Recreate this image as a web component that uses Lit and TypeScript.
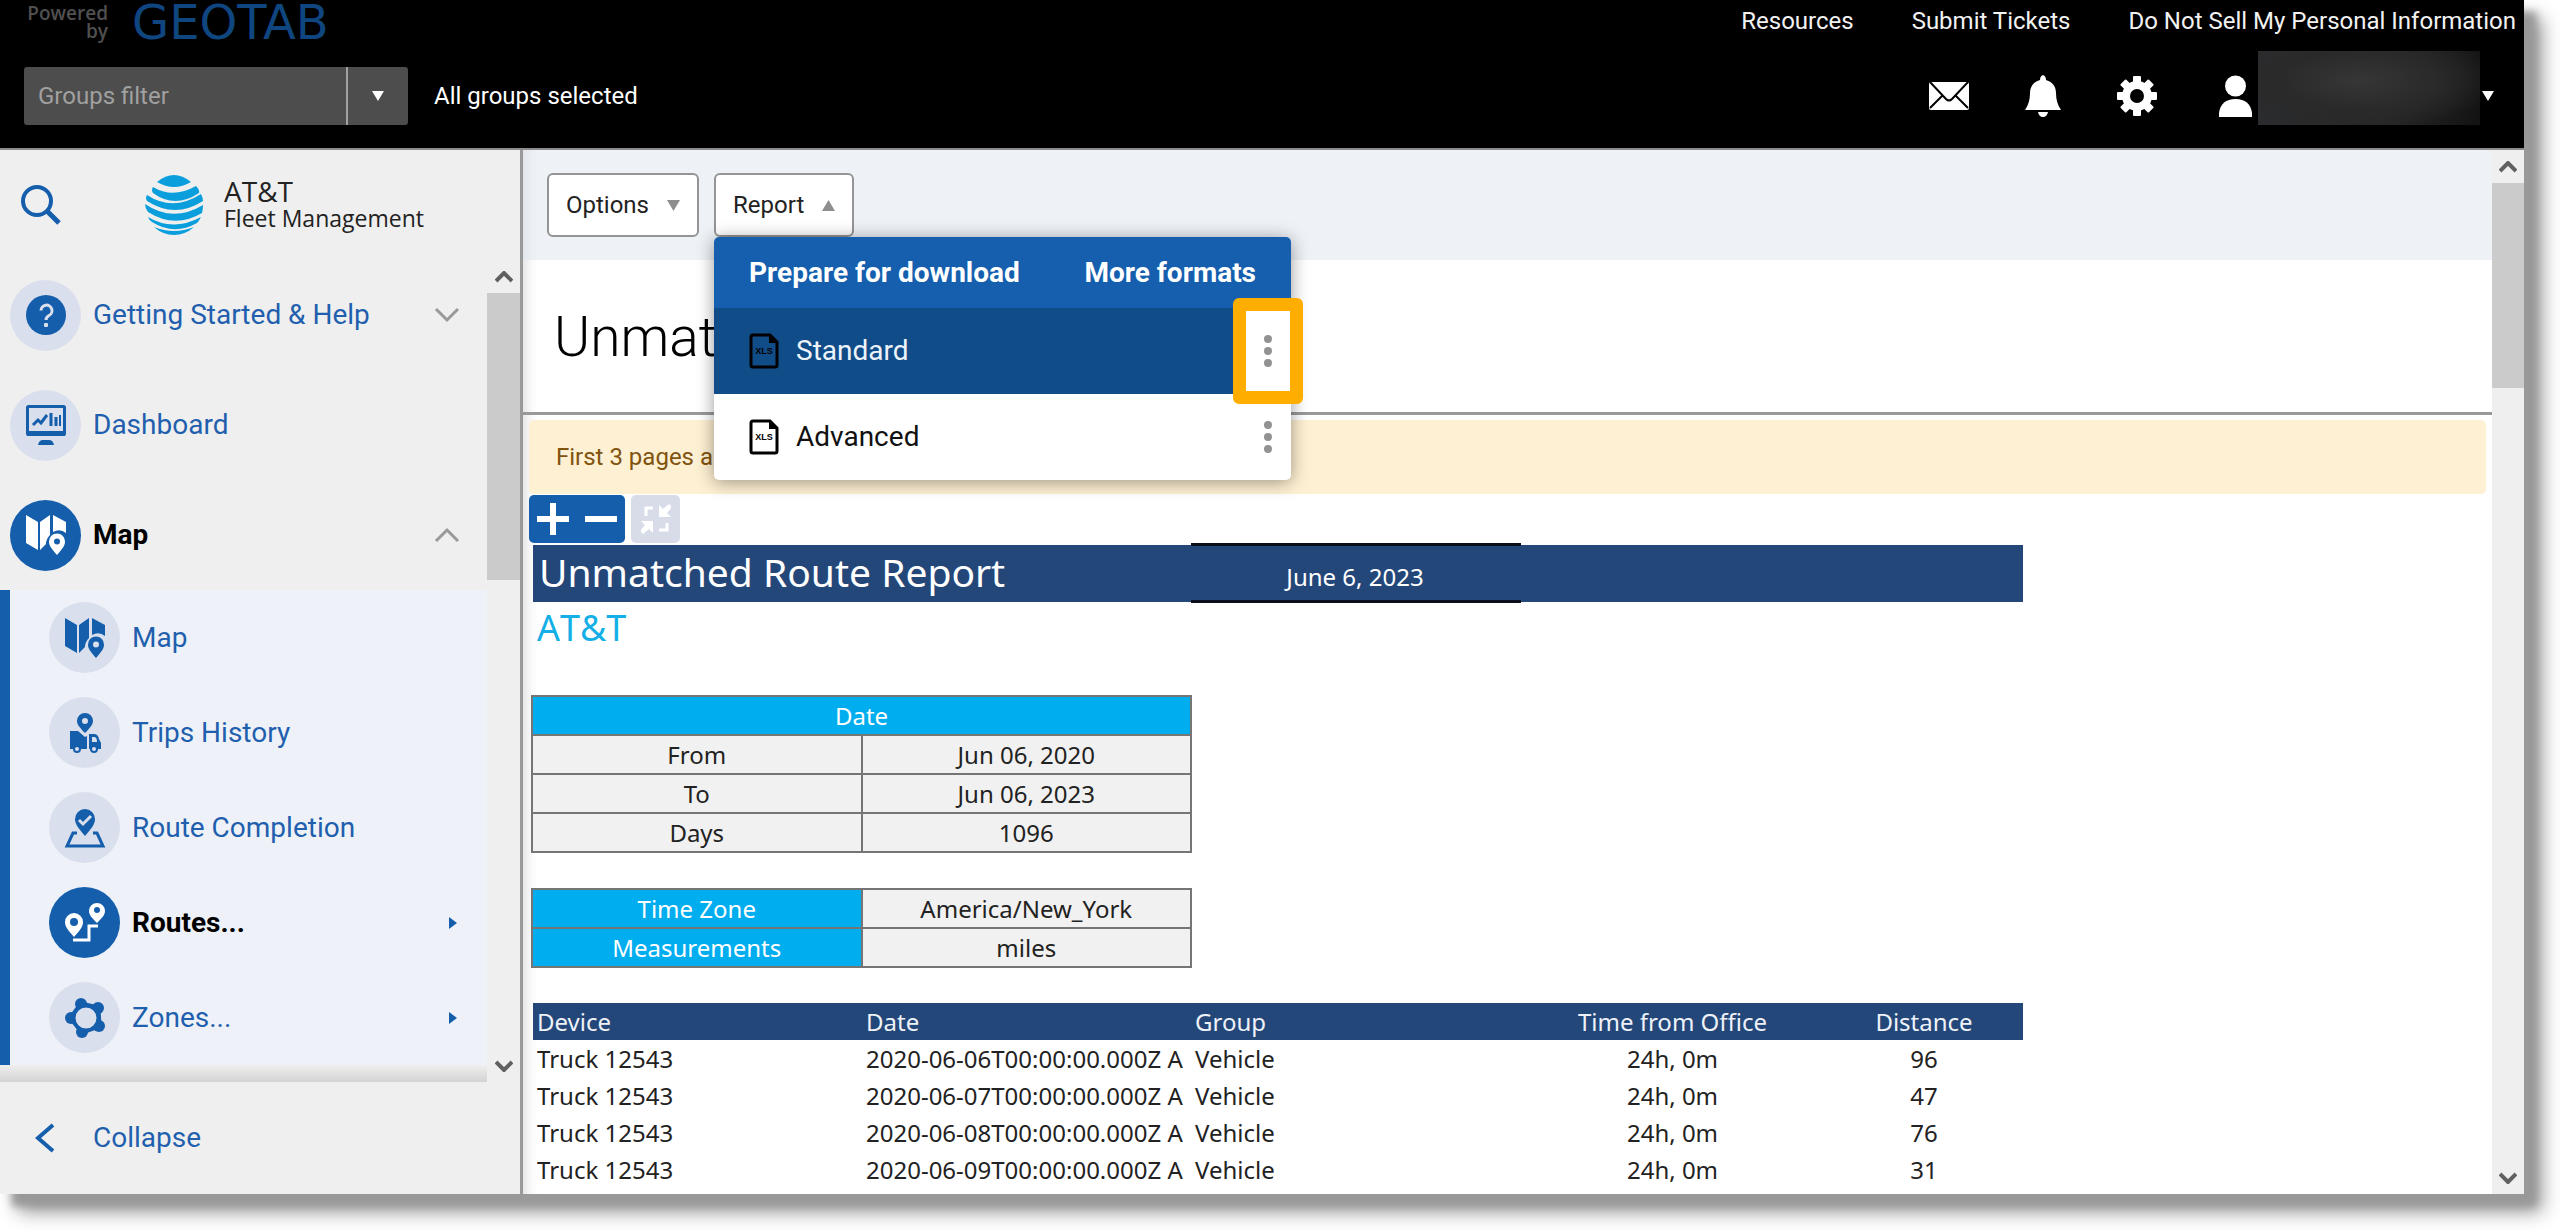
import { LitElement, html, css, svg, nothing } from "lit";
import { customElement, state } from "lit/decorators.js";

const icons: Record<string, unknown> = {
  help: svg`<circle cx="20" cy="20" r="20" fill="currentColor"/>
    <path d="M15 15.500a5.500 5.500 0 1 1 8 5c-2 1.200-3 2-3 4.500" fill="none" stroke="#d9dfec" stroke-width="3"/>
    <rect x="18" y="28" width="4" height="4" rx="1" fill="#d9dfec"/>`,
  dashboard: svg`<rect x="1.500" y="1.500" width="37" height="28" rx="1" fill="none" stroke="currentColor" stroke-width="3"/>
    <path d="M1 26h38v5H1zM12 40q1-5 5-5h6q4 0 5 5z" fill="currentColor"/>
    <path d="M7 20l5-5 3 3 6-8M25 8v13M30 12v9" fill="none" stroke="currentColor" stroke-width="3"/>
    <path d="M34 10v11" fill="none" stroke="currentColor" stroke-width="2"/>`,
  map: svg`<path fill="currentColor" d="M0 0L12 7V35L0 28ZM14 7L24 0V20Q20 24 20 29L14 35ZM27 0L40 7V18Q34 13 27 17Z"/>
    <path fill="currentColor" fill-rule="evenodd" d="M31 40C26 34 23 31 23 26.500A8 8 0 1 1 39 26.500C39 31 36 34 31 40ZM31 23.500a3 3 0 1 0 0 6a3 3 0 1 0 0-6Z"/>`,
  trips: svg`<path fill="currentColor" fill-rule="evenodd" d="M20 20C14 14 12 11 12 8A8 8 0 1 1 28 8C28 11 26 14 20 20ZM20 5a3 3 0 1 0 0 6a3 3 0 1 0 0-6Z"/>
    <path fill="currentColor" fill-rule="evenodd" d="M5 18h8l7 6 2-1v13H5ZM24 21h5q4 0 5 5l2 4v6H24ZM27 24v5h5q0-5-3-5Z"/>
    <circle cx="12" cy="36" r="3" fill="#d9dfec" stroke="currentColor" stroke-width="2"/>
    <circle cx="29" cy="36" r="3" fill="#d9dfec" stroke="currentColor" stroke-width="2"/>`,
  completion: svg`<path fill="currentColor" d="M20 28C12 19 10 15 10 11A10 10 0 1 1 30 11C30 15 28 19 20 28Z"/>
    <path d="M14 12l4 4 8-8" fill="none" stroke="#d9dfec" stroke-width="3"/>
    <path d="M12 25H8L2 38H38L32 25H28" fill="none" stroke="currentColor" stroke-width="3"/>`,
  routes: svg`<path fill="currentColor" fill-rule="evenodd" d="M9 34C3 27 0 24 0 19A9 9 0 1 1 18 19C18 24 15 27 9 34ZM9 15a4 4 0 1 0 0 8a4 4 0 1 0 0-8Z"/>
    <path fill="currentColor" fill-rule="evenodd" d="M32 20C27 15 24 12 24 8A8 8 0 1 1 40 8C40 12 37 15 32 20ZM32 4a3 3 0 1 0 0 6a3 3 0 1 0 0-6Z"/>
    <path d="M8 37H24V23H33" fill="none" stroke="currentColor" stroke-width="3"/>`,
  zones: svg`<path d="M16 6L33 10L34 28L17 34L6 20Z" fill="none" stroke="currentColor" stroke-width="5"/>
    <g fill="currentColor"><circle cx="16" cy="6" r="6"/><circle cx="33" cy="10" r="6"/><circle cx="34" cy="28" r="6"/><circle cx="17" cy="34" r="6"/><circle cx="6" cy="20" r="6"/></g>
    <circle cx="21" cy="20" r="11" fill="#d9dfec"/>
    <circle cx="21" cy="20" r="12" fill="none" stroke="currentColor" stroke-width="3"/>`,
};

const icon = (name: string) => html`<svg class="glyph" viewBox="0 0 40 40" aria-hidden="true">${icons[name]}</svg>`;
const chevron = (cls: string) => html`<svg class="chevron ${cls}" viewBox="0 0 26 16" aria-hidden="true"><path d="M2 2L13 13L24 2" fill="none" stroke="currentColor" stroke-width="3"/></svg>`;
const xls = html`<svg class="xls" viewBox="0 0 30 36" aria-hidden="true">
  <path d="M4 2H21L28 9V32Q28 34 26 34H4Q2 34 2 32V4Q2 2 4 2Z" fill="none" stroke="#000" stroke-width="3"/>
  <path d="M20 1L29 10H20Z" fill="#000"/>
  <text x="15" y="21" text-anchor="middle" font-family="Liberation Sans, sans-serif" font-weight="700" font-size="9">XLS</text></svg>`;
const dots = html`<svg class="dots" viewBox="0 0 8 32" aria-hidden="true"><circle cx="4" cy="4" r="4"/><circle cx="4" cy="16" r="4"/><circle cx="4" cy="28" r="4"/></svg>`;

interface NavItem { name: string; label: string; active?: boolean; fold?: "open" | "closed"; more?: boolean }

const mainNav: NavItem[] = [
  { name: "help", label: "Getting Started & Help", fold: "closed" },
  { name: "dashboard", label: "Dashboard" },
  { name: "map", label: "Map", active: true, fold: "open" },
];
const mapNav: NavItem[] = [
  { name: "map", label: "Map" },
  { name: "trips", label: "Trips History" },
  { name: "completion", label: "Route Completion" },
  { name: "routes", label: "Routes...", active: true, more: true },
  { name: "zones", label: "Zones...", more: true },
];
const rows = [
  ["Truck 12543", "2020-06-06T00:00:00.000Z A", "Vehicle", "24h, 0m", "96"],
  ["Truck 12543", "2020-06-07T00:00:00.000Z A", "Vehicle", "24h, 0m", "47"],
  ["Truck 12543", "2020-06-08T00:00:00.000Z A", "Vehicle", "24h, 0m", "76"],
  ["Truck 12543", "2020-06-09T00:00:00.000Z A", "Vehicle", "24h, 0m", "31"],
];

@customElement("app-header")
class AppHeader extends LitElement {
  static styles = css`
    :host { display: block; background: #000; color: #fff; border-bottom: 2px solid #8c8c8c; font: 24px/32px Roboto, sans-serif; }
    * { box-sizing: border-box; }
    .top { display: flex; justify-content: space-between; height: 44px; padding: 0 8px 0 24px; }
    .brand { display: flex; align-items: center; gap: 24px; }
    .powered { width: 84px; text-align: right; color: #505050; font: 600 19px/18px "Open Sans", sans-serif; }
    .geotab { color: #0f4680; font: 48px/44px "DejaVu Sans", sans-serif; }
    .links { display: flex; gap: 58px; padding-top: 5px; }
    a { color: #f2f2f2; text-decoration: none; }
    .bar { display: flex; align-items: center; height: 104px; padding: 0 30px 0 24px; }
    .filter { display: flex; width: 384px; height: 58px; border-radius: 3px; background: #4d4d4d; overflow: hidden; }
    input { flex: 1; min-width: 0; border: 0; background: none; padding: 0 14px; font: inherit; color: #fff; outline: 0; }
    input::placeholder { color: #a0a0a0; opacity: 1; }
    button { border: 0; padding: 0; background: none; color: #fff; font: inherit; display: flex; align-items: center; justify-content: center; }
    .open { width: 62px; border-left: 2px solid #a0a0a0; }
    .caret { width: 12px; height: 10px; fill: #fff; }
    .scope { margin-left: 26px; flex: 1; }
    .tool { width: 94px; height: 58px; }
    .user { margin-left: 35px; height: 104px; align-items: center; gap: 2px; }
    .name { width: 222px; height: 74px; margin: 0 0 17px 4px; background: radial-gradient(ellipse at 45% 40%, #363636 0, #2a2a2a 45%, transparent 80%), linear-gradient(100deg, #2b2c2f, #262626 60%, #131313); }
  `;
  render() {
    const caret = html`<svg class="caret" viewBox="0 0 12 10" aria-hidden="true"><path d="M0 0H12L6 10Z"/></svg>`;
    return html`
      <div class="top">
        <div class="brand"><span class="powered">Powered<br>by</span><span class="geotab">GEOTAB</span></div>
        <nav class="links"><a href="#">Resources</a><a href="#">Submit Tickets</a><a href="#">Do Not Sell My Personal Information</a></nav>
      </div>
      <div class="bar">
        <div class="filter"><input aria-label="Groups filter" placeholder="Groups filter"><button class="open" aria-label="Open groups">${caret}</button></div>
        <span class="scope">All groups selected</span>
        <button class="tool" aria-label="Messages"><svg width="40" height="28" viewBox="0 0 40 28"><rect width="40" height="28" rx="2" fill="#fff"/><path d="M1 0L17 17Q20 20 23 17L39 0M1 26L13 14M39 26L27 14" fill="none" stroke="#000" stroke-width="2"/></svg></button>
        <button class="tool" aria-label="Notifications"><svg width="36" height="42" viewBox="0 0 36 42"><path fill="#fff" d="M18 0Q21 1 21 5C28 7 31 12 31 18Q31 28 36 35H0Q5 28 5 18C5 12 8 7 15 5Q15 1 18 0ZM13 37H23Q22 42 18 42Q14 42 13 37Z"/></svg></button>
        <button class="tool" aria-label="Settings"><svg width="42" height="42" viewBox="-21 -21 42 42"><g fill="#fff">${[0, 45, 90, 135].map(a => svg`<rect x="-4" y="-20" width="8" height="40" rx="1" transform="rotate(${a})"/>`)}<circle r="15"/></g><circle r="7" fill="#000"/></svg></button>
        <button class="user" aria-label="Account"><svg width="33" height="42" viewBox="0 0 33 42"><circle cx="16.500" cy="11" r="10.500" fill="#fff"/><path d="M0 42V38Q2 24 16.500 24Q31 24 33 38V42Z" fill="#fff"/></svg><span class="name"></span>${caret}</button>
      </div>`;
  }
}

@customElement("app-scrollbar")
class AppScrollbar extends LitElement {
  static styles = css`
    :host { display: flex; flex-direction: column; align-items: center; background: #efefef; color: #606060; }
    .step { border: 0; background: none; padding: 0; width: 100%; height: 33px; color: inherit; display: grid; place-items: center; }
    .track { flex: 1; width: 100%; }
    .thumb { background: #cbcbcb; height: var(--thumb, 30%); }
    .chevron { width: 18px; height: 12px; }
    .up { transform: rotate(180deg); }
  `;
  render() {
    const arrow = (c: string) => html`<svg class="chevron ${c}" viewBox="0 0 18 12" aria-hidden="true"><path d="M1 2L9 10L17 2" fill="none" stroke="currentColor" stroke-width="4"/></svg>`;
    return html`<button class="step" aria-label="Scroll up">${arrow("up")}</button>
      <div class="track"><div class="thumb"></div></div>
      <button class="step" aria-label="Scroll down">${arrow("")}</button>`;
  }
}

@customElement("app-sidebar")
class AppSidebar extends LitElement {
  static styles = css`
    :host { display: flex; flex-direction: column; width: 523px; border-right: 3px solid #999; background: #efefef; color: #1f5fae; font: 28px/36px Roboto, sans-serif; box-sizing: border-box; min-height: 0; }
    * { box-sizing: border-box; }
    button, a { border: 0; background: none; padding: 0; font: inherit; color: inherit; text-decoration: none; text-align: left; }
    .head { display: flex; align-items: center; height: 110px; padding-left: 21px; }
    .search { width: 40px; height: 40px; }
    .logo { display: flex; align-items: center; gap: 21px; margin-left: 84px; color: #222; font: 500 23px/28px "Open Sans", sans-serif; }
    .logo b { font-weight: 500; font-size: 28px; display: block; line-height: 26px; }
    .body { display: flex; flex: 1; min-height: 0; }
    .nav { flex: 1; overflow: hidden; display: flex; flex-direction: column; }
    app-scrollbar { width: 33px; --thumb: 38%; }
    .item { display: flex; align-items: center; gap: 12px; height: 110px; padding: 0 27px 0 10px; flex: none; }
    .label { flex: 1; }
    .disc { width: 71px; height: 71px; border-radius: 50%; background: #d9dfec; color: #145eac; display: grid; place-items: center; }
    .active { color: #000; font-weight: 700; }
    .active .disc { background: #145eac; color: #fff; }
    .glyph { width: 40px; height: 40px; overflow: visible; }
    .chevron { width: 26px; height: 16px; color: #999; }
    .up { transform: rotate(180deg); }
    .sub { border-left: 10px solid #145eac; background: #eef2f8; flex: none; }
    .sub .item { height: 95px; padding: 0 30px 0 39px; }
    .more { width: 8px; height: 12px; fill: #145eac; }
    .fade { height: 17px; flex: none; background: linear-gradient(#efefef, #d3d3d3); }
    .collapse { display: flex; align-items: center; height: 112px; padding-left: 35px; gap: 38px; }
  `;
  private item(i: NavItem) {
    return html`<a href="#" class="item ${i.active ? "active" : ""}"><span class="disc">${icon(i.name)}</span><span class="label">${i.label}</span>
      ${i.fold ? chevron(i.fold === "open" ? "up" : "") : nothing}
      ${i.more ? html`<svg class="more" viewBox="0 0 8 12" aria-hidden="true"><path d="M0 0L8 6L0 12Z"/></svg>` : nothing}</a>`;
  }
  render() {
    return html`
      <div class="head">
        <button class="search" aria-label="Search"><svg width="40" height="40" viewBox="0 0 40 40"><circle cx="16" cy="16" r="14" fill="none" stroke="#145eac" stroke-width="4"/><path d="M26 26L38 38" stroke="#145eac" stroke-width="5"/></svg></button>
        <div class="logo">
          <svg width="58" height="60" viewBox="0 0 58 60" aria-hidden="true"><g fill="#0a9fdc">
            <path d="M12 7Q29 -7 46 7Q29 17 12 7Z"/>
            <path d="M8 12Q28 24 51 11Q55 15 54 18Q30 34 8 18Q6 15 8 12Z"/>
            <path d="M2 20Q28 37 56 19Q58 23 58 26Q30 44 2 26Q0 23 2 20Z"/>
            <path d="M0 29Q28 48 58 30Q58 34 57 38Q30 54 3 37Q0 33 0 29Z"/>
            <path d="M3 42Q28 57 56 42Q54 46 52 48Q29 61 7 47Q4 45 3 42Z"/>
            <path d="M9 52Q29 60 49 52Q40 60 29 60Q18 60 9 52Z"/></g></svg>
          <span><b>AT&amp;T</b>Fleet Management</span>
        </div>
      </div>
      <div class="body">
        <nav class="nav">${mainNav.map(i => this.item(i))}<div class="sub">${mapNav.map(i => this.item(i))}</div><div class="fade"></div></nav>
        <app-scrollbar></app-scrollbar>
      </div>
      <button class="collapse"><svg width="20" height="30" viewBox="0 0 20 30" aria-hidden="true"><path d="M18 2L3 15L18 28" fill="none" stroke="#145eac" stroke-width="4"/></svg>Collapse</button>`;
  }
}

@customElement("report-sheet")
class ReportSheet extends LitElement {
  static styles = css`
    :host { display: block; font: 24px/36px "Noto Sans", "Open Sans", sans-serif; color: #222; padding: 2px 10px 0; }
    * { box-sizing: border-box; }
    .banner { display: grid; grid-template-columns: 658px 330px 1fr; height: 57px; max-width: 1490px; background: #24477a; color: #fff; }
    h2 { margin: 0; padding-left: 6px; font-weight: 400; font-size: 39px; line-height: 54px; }
    .day { border: solid #0a0f1c; border-width: 3px 0; margin-top: -2px; height: 60px; text-align: center; line-height: 62px; padding-right: 2px; }
    .company { color: #14afe6; font-size: 36px; line-height: 52px; padding-left: 4px; height: 93px; font-kerning: none; }
    table { border-collapse: collapse; table-layout: fixed; }
    .facts { width: 661px; margin: 0 0 35px -2px; text-align: center; }
    .facts td, .facts th { border: 2px solid #757575; height: 39px; padding: 0; line-height: 36px; width: 50%; font-weight: 400; background: #f1f1f1; }
    .facts .key { background: #00adef; color: #fff; }
    .log { max-width: 1490px; width: 100%; white-space: nowrap; }
    .log th { background: #24477a; color: #eef2f8; font-weight: 400; }
    .log th, .log td { text-align: left; padding: 0 0 0 4px; line-height: 37px; }
    .log .c { text-align: center; padding: 0; }
    .wide { width: 329px; } .time { width: 305px; } .dist { width: 198px; }
  `;
  render() {
    return html`
      <div class="banner"><h2>Unmatched Route Report</h2><div class="day">June 6, 2023</div></div>
      <div class="company">AT&amp;T</div>
      <table class="facts">
        <thead><tr><th class="key" colspan="2">Date</th></tr></thead>
        <tbody><tr><td>From</td><td>Jun 06, 2020</td></tr><tr><td>To</td><td>Jun 06, 2023</td></tr><tr><td>Days</td><td>1096</td></tr></tbody>
      </table>
      <table class="facts"><tbody><tr><th class="key">Time Zone</th><td>America/New_York</td></tr><tr><th class="key">Measurements</th><td>miles</td></tr></tbody></table>
      <table class="log">
        <colgroup><col class="wide"><col class="wide"><col class="wide"><col class="time"><col class="dist"></colgroup>
        <thead><tr><th>Device</th><th>Date</th><th>Group</th><th class="c">Time from Office</th><th class="c">Distance</th></tr></thead>
        <tbody>${rows.map(r => html`<tr>${r.map((c, i) => html`<td class=${i > 2 ? "c" : ""}>${c}</td>`)}</tr>`)}</tbody>
      </table>`;
  }
}

@customElement("report-menu")
class ReportMenu extends LitElement {
  static styles = css`
    :host { display: block; width: 577px; border-radius: 5px; background: #fff; box-shadow: 0 2px 18px rgba(0, 0, 0, 0.4); font: 28px/36px Roboto, sans-serif; color: #111; }
    * { box-sizing: border-box; }
    button { border: 0; background: none; padding: 0; font: inherit; color: inherit; }
    .head { display: flex; justify-content: space-between; height: 71px; align-items: center; padding: 0 35px; background: #155fae; color: #fff; border-radius: 5px 5px 0 0; font-weight: 700; }
    .row { display: flex; align-items: center; height: 86px; padding-left: 35px; }
    .pick { display: flex; flex: 1; align-items: center; gap: 17px; text-align: left; }
    .on { background: #104c87; color: #edf3fa; }
    .xls { width: 30px; height: 36px; }
    .dots { width: 8px; height: 32px; fill: #929292; }
    .kebab { width: 44px; height: 80px; margin-right: 1px; display: grid; place-items: center; }
    .kebab.mark { flex: none; width: 70px; height: 106px; margin-right: -12px; background: #fff; border: 13px solid #ffae00; border-radius: 6px; position: relative; }
  `;
  render() {
    return html`
      <div class="head"><button>Prepare for download</button><button>More formats</button></div>
      <div class="row on"><button class="pick">${xls}Standard</button><button class="kebab mark" aria-label="Standard actions">${dots}</button></div>
      <div class="row"><button class="pick">${xls}Advanced</button><button class="kebab" aria-label="Advanced actions">${dots}</button></div>`;
  }
}

@customElement("app-root")
class AppRoot extends LitElement {
  @state() private menuOpen = true;
  static styles = css`
    :host { display: block; background: #fff; font-family: Roboto, sans-serif; }
    * { box-sizing: border-box; }
    .page { height: 100vh; padding: 0 36px 36px 0; overflow: hidden; }
    .window { height: 100%; display: grid; grid-template-rows: auto minmax(0, 1fr); box-shadow: 18px 18px 18px 0 #999, 12px 12px 8px 0 #999; background: #fff; }
    .work { display: grid; grid-template-columns: auto minmax(0, 1fr) 32px; min-height: 0; }
    app-scrollbar { --thumb: 21%; }
    .main { overflow: hidden; position: relative; box-shadow: inset 14px 0 14px -12px rgba(0, 0, 0, 0.16); }
    .tools { display: flex; gap: 15px; height: 110px; padding: 23px 0 0 24px; background: rgba(222, 229, 240, 0.5); }
    .drop { position: relative; }
    .btn { display: flex; align-items: center; gap: 18px; height: 64px; padding: 0 17px; border: 2px solid #949494; border-radius: 6px; background: #fff; color: #222; font: 24px/32px Roboto, sans-serif; }
    .caret { width: 13px; height: 11px; fill: #8e8e8e; }
    report-menu { position: absolute; left: 0; top: 64px; z-index: 2; }
    h1 { margin: 0; height: 155px; padding: 0 0 0 31px; border-bottom: 3px solid #999; font: 300 55px/154px Roboto, sans-serif; color: #000; }
    .note { margin: 5px 6px 0; height: 74px; border-radius: 5px; background: rgba(254, 239, 208, 0.95); color: #80530f; font-size: 24px; line-height: 74px; padding-left: 27px; }
    .zoom { display: flex; gap: 6px; padding: 1px 6px 0; }
    .pair { display: flex; width: 96px; height: 48px; background: #145eac; border-radius: 5px; }
    .zoom button { border: 0; background: none; padding: 0; flex: 1; display: grid; place-items: center; }
    .zoom .fit { flex: none; width: 49px; height: 48px; background: #d7dce8; border-radius: 5px; }
  `;
  render() {
    return html`<div class="page"><div class="window">
      <app-header></app-header>
      <div class="work">
        <app-sidebar></app-sidebar>
        <main class="main">
          <div class="tools">
            <button class="btn">Options<svg class="caret" viewBox="0 0 13 11" aria-hidden="true"><path d="M0 0H13L6.500 11Z"/></svg></button>
            <div class="drop">
              <button class="btn" aria-expanded=${this.menuOpen} @click=${() => (this.menuOpen = !this.menuOpen)}>Report<svg class="caret" viewBox="0 0 13 11" aria-hidden="true"><path d="M0 11H13L6.500 0Z"/></svg></button>
              ${this.menuOpen ? html`<report-menu></report-menu>` : nothing}
            </div>
          </div>
          <h1>Unmatched Route Report</h1>
          <div class="note">First 3 pages are displayed</div>
          <div class="zoom">
            <div class="pair">
              <button aria-label="Zoom in"><svg width="32" height="32" viewBox="0 0 32 32"><path d="M16 0V32M0 16H32" stroke="#fff" stroke-width="6"/></svg></button>
              <button aria-label="Zoom out"><svg width="32" height="32" viewBox="0 0 32 32"><path d="M0 16H32" stroke="#fff" stroke-width="6"/></svg></button>
            </div>
            <button class="fit" aria-label="Fit page"><svg width="30" height="32" viewBox="0 0 30 32"><path d="M5 13V5H12M26 20V27H18" fill="none" stroke="#fff" stroke-width="3"/><path d="M18 2V14H30L26 10L31 4L28 1L22 6ZM12 30V18H0L4 22L-1 28L2 31L8 26Z" fill="#fff"/></svg></button>
          </div>
          <report-sheet></report-sheet>
        </main>
        <app-scrollbar></app-scrollbar>
      </div>
    </div></div>`;
  }
}
